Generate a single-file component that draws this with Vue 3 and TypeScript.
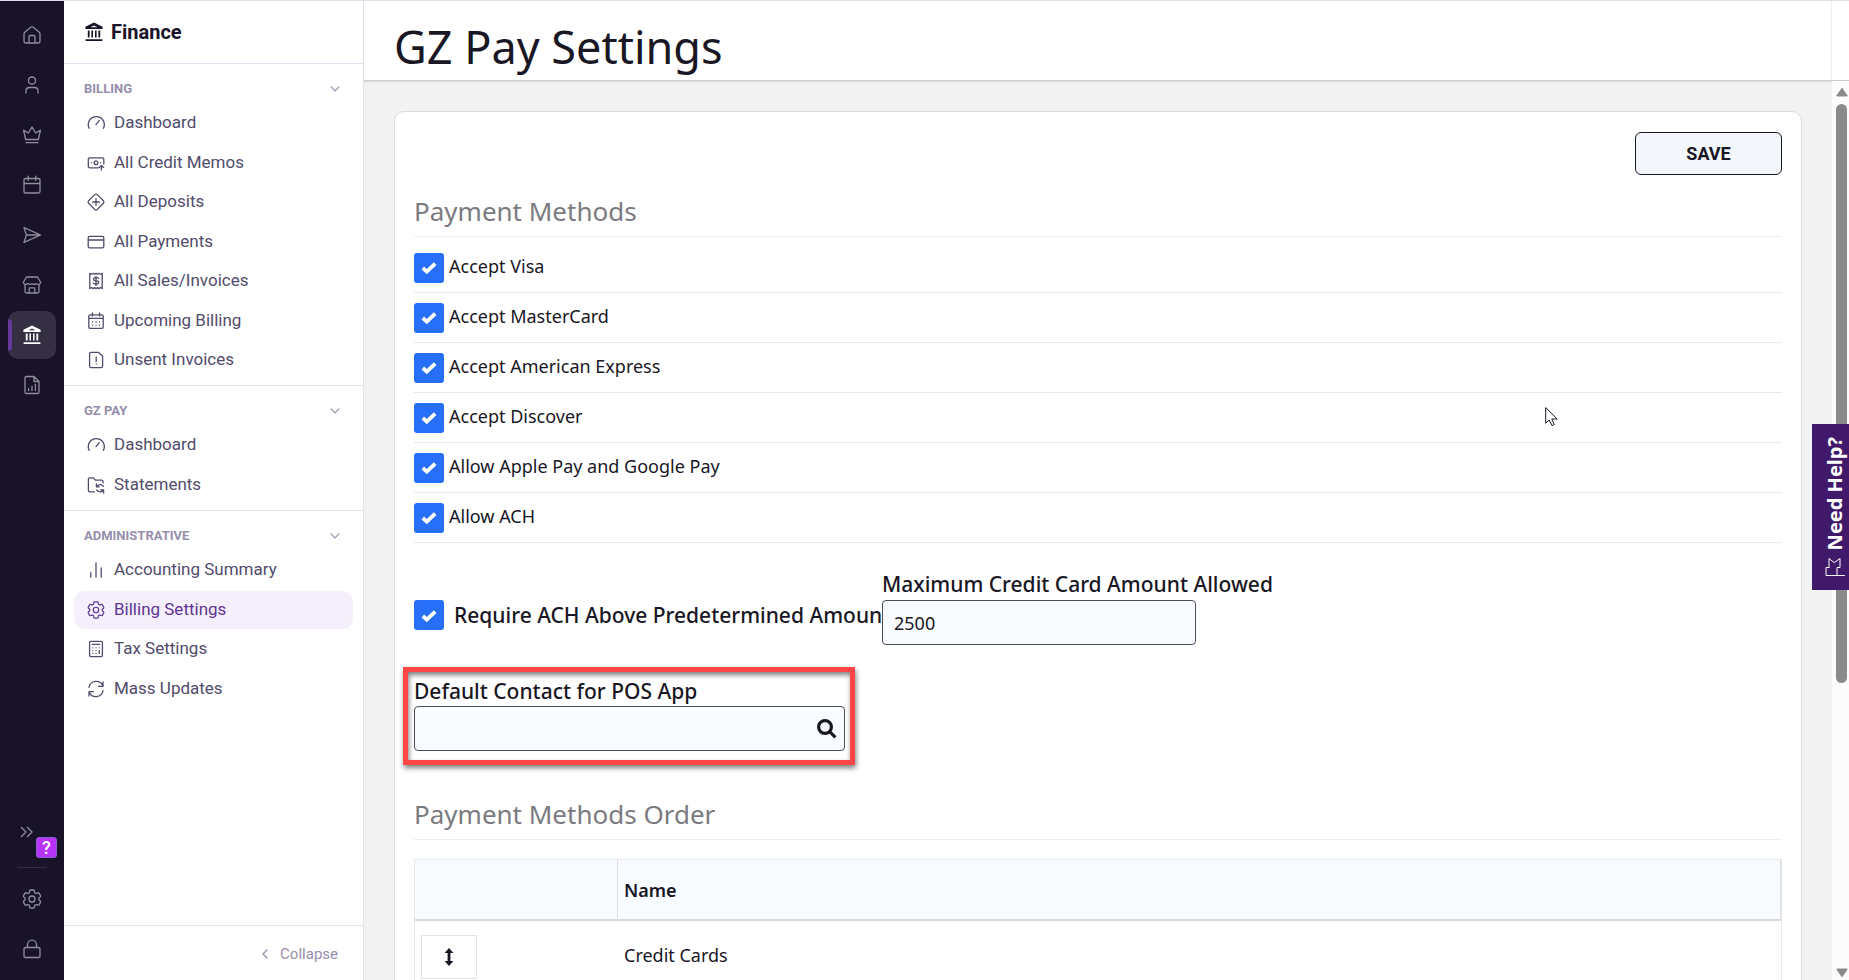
<script setup lang="ts">
import { ref } from 'vue'

interface NavItem {
  label: string
  icon: string
  active?: boolean
}
interface NavSection {
  title: string
  items: NavItem[]
}
interface RailItem {
  label: string
  icon: string
  active?: boolean
}

const gearPath =
  'M9.594 3.94c.09-.542.56-.94 1.11-.94h2.593c.55 0 1.02.398 1.11.94l.213 1.281c.063.374.313.686.645.87.074.04.147.083.22.127.325.196.72.257 1.075.124l1.217-.456a1.125 1.125 0 0 1 1.37.49l1.296 2.247a1.125 1.125 0 0 1-.26 1.431l-1.003.827c-.293.241-.438.613-.43.992a7.723 7.723 0 0 1 0 .255c-.008.378.137.75.43.991l1.004.827c.424.35.534.955.26 1.43l-1.298 2.247a1.125 1.125 0 0 1-1.369.491l-1.217-.456c-.355-.133-.75-.072-1.076.124a6.47 6.47 0 0 1-.22.128c-.331.183-.581.495-.644.869l-.213 1.281c-.09.543-.56.94-1.11.94h-2.594c-.55 0-1.019-.398-1.11-.94l-.213-1.281c-.062-.374-.312-.686-.644-.87a6.52 6.52 0 0 1-.22-.127c-.325-.196-.72-.257-1.076-.124l-1.217.456a1.125 1.125 0 0 1-1.369-.49l-1.297-2.247a1.125 1.125 0 0 1 .26-1.431l1.004-.827c.292-.24.437-.613.43-.991a6.932 6.932 0 0 1 0-.255c.007-.38-.138-.751-.43-.992l-1.004-.827a1.125 1.125 0 0 1-.26-1.43l1.297-2.247a1.125 1.125 0 0 1 1.37-.491l1.216.456c.356.133.751.072 1.076-.124.072-.044.146-.086.22-.128.332-.183.582-.495.644-.869l.214-1.28ZM15 12a3 3 0 1 1-6 0 3 3 0 0 1 6 0Z'

// Outline icons on a 20-unit grid
const icons: Record<string, string> = {
  home: 'M2 9 Q2 7.8 3 7 L8.8 2.3 Q10 1.4 11.2 2.3 L17 7 Q18 7.8 18 9 V16 Q18 18 16 18 H4 Q2 18 2 16 Z M7 18 V12 Q7 10.5 8.5 10.5 H11.5 Q13 10.5 13 12 V18',
  person: 'M10 2 a3.6 3.6 0 1 1 0 7.2 a3.6 3.6 0 1 1 0 -7.2 M4 18 V16 Q4 12.5 7.5 12.5 H12.5 Q16 12.5 16 16 V18',
  crown: 'M3.6 14.5 L1.6 5.2 L6.3 8 L10 2 L13.7 8 L18.4 5.2 L16.4 14.5 Z M4 17.6 H16',
  calendar: 'M3.5 3.5 H16.5 Q18 3.5 18 5 V16.5 Q18 18 16.5 18 H3.5 Q2 18 2 16.5 V5 Q2 3.5 3.5 3.5 Z M2 8.5 H18 M6.2 1.2 V5.4 M13.8 1.2 V5.4',
  send: 'M2 2.6 L18.6 10 L2 17.4 L4.4 10 Z M4.4 10 H18',
  store: 'M4.5 2 H15.5 L18.5 7 V8 Q18.3 9.4 16.2 9.4 Q14.8 9.4 14 8.6 Q12.8 9.4 12 9.4 Q10.8 9.4 10 8.6 Q9.2 9.4 8 9.4 Q7 9.4 6 8.6 Q5 9.4 3.8 9.4 Q1.7 9.4 1.5 8 V7 Z M3 9.6 V16.5 Q3 18 4.5 18 H15.5 Q17 18 17 16.5 V9.6 M7.2 18 V13.6 Q7.2 12.8 8 12.8 H12 Q12.8 12.8 12.8 13.6 V18',
  report: 'M4.5 1.5 H12 L17 6.5 V17 Q17 18.5 15.5 18.5 H4.5 Q3 18.5 3 17 V3 Q3 1.5 4.5 1.5 Z M12 1.5 V6.5 H17 M6.6 13.4 V15.4 M10 11.4 V15.4 M13.4 9.4 V15.4',
  lock: 'M3.5 8.5 H16.5 Q18 8.5 18 10 V17 Q18 18.5 16.5 18.5 H3.5 Q2 18.5 2 17 V10 Q2 8.5 3.5 8.5 Z M5.5 8.5 V5.6 A4.5 4.5 0 0 1 14.5 5.6 V8.5',
  gauge: 'M3.2 15.3 A8 8 0 1 1 17.4 15.3 M10 11.6 L13.2 7.6',
  memo: 'M12.5 14.8 H4 Q2.3 14.8 2.3 13.2 V6.4 Q2.3 4.8 4 4.8 H16.2 Q17.8 4.8 17.8 6.4 V11 M10 7.8 a1.9 1.9 0 1 1 0 3.8 a1.9 1.9 0 1 1 0 -3.8 M5.3 9.7 h.1 M14.6 9.7 h.1 M15.4 17 V12.6 M13.2 14.4 L15.4 12.4 L17.6 14.4',
  deposit: 'M8.7 2.6 Q10 1.6 11.3 2.6 L17.4 8.7 Q18.4 10 17.4 11.3 L11.3 17.4 Q10 18.4 8.7 17.4 L2.6 11.3 Q1.6 10 2.6 8.7 Z M10 6.6 V13.4 M6.6 10 H13.4',
  card: 'M3.6 4.4 H16.4 Q17.8 4.4 17.8 5.8 V14.4 Q17.8 15.8 16.4 15.8 H3.6 Q2.2 15.8 2.2 14.4 V5.8 Q2.2 4.4 3.6 4.4 Z M2.2 8 H17.8',
  receipt: 'M3.8 2.2 V17.4 L5.6 16.6 L7.2 17.6 L8.6 16.6 L10 17.6 L11.4 16.6 L12.8 17.6 L14.4 16.6 L16.2 17.4 V2.2 L14.4 3.2 L12.8 2.2 L11.4 3.2 L10 2.2 L8.6 3.2 L7.2 2.2 L5.6 3.2 Z M12.6 7.4 Q12 6.6 10.6 6.6 H9.6 Q7.6 6.6 7.6 8.2 Q7.6 9.8 9.6 9.8 H10.6 Q12.6 9.8 12.6 11.4 Q12.6 13 10.6 13 H9.4 Q8 13 7.4 12.2 M10 5.4 V14.4',
  schedule: 'M4 3.8 H16 Q17.2 3.8 17.2 5 V16 Q17.2 17.4 16 17.4 H4 Q2.8 17.4 2.8 16 V5 Q2.8 3.8 4 3.8 Z M2.8 7.4 H17.2 M6.4 1.8 V5 M13.6 1.8 V5 M6.6 11 h.1 M10 11 h.1 M13.4 11 h.1 M6.6 14.2 h.1 M10 14.2 h.1 M13.4 14.2 h.1',
  alert: 'M5 2.4 H12.6 L16.6 6 V16 Q16.6 17.6 15 17.6 H5 Q3.6 17.6 3.6 16 V4 Q3.6 2.4 5 2.4 Z M10.2 7 V11.4 M10.2 14 v.1',
  folder: 'M8.4 16.8 H3.8 Q2.4 16.8 2.4 15.4 V4.2 Q2.4 2.8 3.8 2.8 H7.4 L9.4 5.2 H15.6 Q17 5.2 17 6.6 V7.8 M17.6 11.4 Q14 7.8 10.6 11.6 M10.4 8.8 V11.8 H13.2 M10.8 15 Q14 18.8 17.4 15.2 M17.6 18 V15 H14.8',
  bars: 'M4.8 17 V12.6 M10 17 V2.8 M15.2 17 V8',
  calculator: 'M5 2.4 H15 Q16.4 2.4 16.4 3.8 V16.2 Q16.4 17.6 15 17.6 H5 Q3.6 17.6 3.6 16.2 V3.8 Q3.6 2.4 5 2.4 Z M6.4 5.4 H13.6 M6.8 8.8 h.1 M10 8.8 h.1 M13.2 8.8 h.1 M6.8 11.6 h.1 M10 11.6 h.1 M6.8 14.4 h.1 M10 14.4 h.1 M13.2 11.6 V14.4',
  refresh: 'M3 8.4 A7.2 7.2 0 0 1 16.8 7 M17 3 V7.4 H12.6 M17 11.6 A7.2 7.2 0 0 1 3.2 13 M3 17 V12.6 H7.4',
}

const rail: RailItem[] = [
  { label: 'Home', icon: 'home' },
  { label: 'Contacts', icon: 'person' },
  { label: 'Memberships', icon: 'crown' },
  { label: 'Events', icon: 'calendar' },
  { label: 'Communication', icon: 'send' },
  { label: 'Store', icon: 'store' },
  { label: 'Finance', icon: 'bank', active: true },
  { label: 'Reports', icon: 'report' },
]

const sections: NavSection[] = [
  {
    title: 'BILLING',
    items: [
      { label: 'Dashboard', icon: 'gauge' },
      { label: 'All Credit Memos', icon: 'memo' },
      { label: 'All Deposits', icon: 'deposit' },
      { label: 'All Payments', icon: 'card' },
      { label: 'All Sales/Invoices', icon: 'receipt' },
      { label: 'Upcoming Billing', icon: 'schedule' },
      { label: 'Unsent Invoices', icon: 'alert' },
    ],
  },
  {
    title: 'GZ PAY',
    items: [
      { label: 'Dashboard', icon: 'gauge' },
      { label: 'Statements', icon: 'folder' },
    ],
  },
  {
    title: 'ADMINISTRATIVE',
    items: [
      { label: 'Accounting Summary', icon: 'bars' },
      { label: 'Billing Settings', icon: 'gear', active: true },
      { label: 'Tax Settings', icon: 'calculator' },
      { label: 'Mass Updates', icon: 'refresh' },
    ],
  },
]

const methods = ref([
  { label: 'Accept Visa', on: true },
  { label: 'Accept MasterCard', on: true },
  { label: 'Accept American Express', on: true },
  { label: 'Accept Discover', on: true },
  { label: 'Allow Apple Pay and Google Pay', on: true },
  { label: 'Allow ACH', on: true },
])
const requireAch = ref(true)
const maxAmount = ref('2500')
const contact = ref('')
</script>

<template>
  <div class="app">
    <nav class="rail" aria-label="Modules">
      <a
        v-for="item in rail"
        :key="item.label"
        href="#"
        class="rail-item"
        :class="{ active: item.active }"
        :aria-label="item.label"
      >
        <svg v-if="item.icon === 'bank'" class="icon" viewBox="0 0 20 20">
          <path class="solid" d="M10 .6 18.6 4.8V7H1.4V4.8Z M3.8 8.6h1.8v7H3.8Z M7.4 8.6h1.6v7H7.4Z M11 8.6h1.6v7H11Z M14.4 8.6h1.8v7h-1.8Z M1.6 17.2h16.8v1.9H1.6Z" />
          <path class="cut" d="M6.4 5.2 10 3.4 13.6 5.2Z" />
        </svg>
        <svg v-else class="icon" viewBox="0 0 20 20"><path :d="icons[item.icon]" /></svg>
      </a>
      <div class="rail-foot">
        <button class="expand" type="button" aria-label="Expand menu">
          <svg viewBox="0 0 14 12"><path d="M1.5 1.5 6 6 1.5 10.5M7.5 1.5 12 6 7.5 10.5" /></svg>
          <span class="badge">?</span>
        </button>
        <div class="rail-line"></div>
        <a href="#" class="rail-item" aria-label="Settings">
          <svg class="icon gear" viewBox="2 2 20 20"><path :d="gearPath" /></svg>
        </a>
        <a href="#" class="rail-item" aria-label="Lock">
          <svg class="icon" viewBox="0 0 20 20"><path :d="icons.lock" /></svg>
        </a>
      </div>
    </nav>

    <aside class="side">
      <header class="side-head">
        <svg class="bank" viewBox="0 0 20 20">
          <path class="solid" d="M10 .6 18.6 4.8V7H1.4V4.8Z M3.8 8.6h1.8v7H3.8Z M7.4 8.6h1.6v7H7.4Z M11 8.6h1.6v7H11Z M14.4 8.6h1.8v7h-1.8Z M1.6 17.2h16.8v1.9H1.6Z" />
          <path class="cut" d="M6.4 5.2 10 3.4 13.6 5.2Z" />
        </svg>
        <span>Finance</span>
      </header>
      <section v-for="section in sections" :key="section.title" class="group">
        <button class="group-head" type="button" aria-expanded="true">
          <span>{{ section.title }}</span>
          <svg viewBox="0 0 10 6"><path d="M1 .8 5 4.8 9 .8" /></svg>
        </button>
        <ul>
          <li v-for="item in section.items" :key="item.label">
            <a href="#" class="nav-item" :class="{ active: item.active }">
              <svg v-if="item.icon === 'gear'" class="icon" viewBox="1 1 22 22"><path :d="gearPath" /></svg>
              <svg v-else class="icon" viewBox="0 0 20 20"><path :d="icons[item.icon]" /></svg>
              <span>{{ item.label }}</span>
            </a>
          </li>
        </ul>
      </section>
      <button class="collapse" type="button">
        <svg viewBox="0 0 6 10"><path d="M5 1 1 5 5 9" /></svg>
        <span>Collapse</span>
      </button>
    </aside>

    <div class="page">
      <header class="page-head"><h1>GZ Pay Settings</h1></header>
      <div class="body">
        <main class="content">
          <form class="card" @submit.prevent>
            <div class="actions"><button class="save" type="submit">SAVE</button></div>
            <h2>Payment Methods</h2>
            <ul class="methods">
              <li v-for="(method, i) in methods" :key="method.label">
                <input :id="`method-${i}`" v-model="method.on" type="checkbox" />
                <label :for="`method-${i}`">{{ method.label }}</label>
              </li>
            </ul>

            <div class="limits">
              <div class="require">
                <input id="require-ach" v-model="requireAch" type="checkbox" />
                <label for="require-ach">Require ACH Above Predetermined Amount</label>
              </div>
              <div class="amount">
                <label for="max-amount">Maximum Credit Card Amount Allowed</label>
                <input id="max-amount" v-model="maxAmount" class="field" type="text" />
              </div>
            </div>

            <div class="contact">
              <label for="contact">Default Contact for POS App</label>
              <div class="lookup field">
                <input id="contact" v-model="contact" type="text" />
                <button type="button" aria-label="Search contacts">
                  <svg viewBox="0 0 20 20"><circle cx="8" cy="8" r="6.4" /><path d="M12.6 12.6 18.4 18.4" /></svg>
                </button>
              </div>
            </div>

            <h2>Payment Methods Order</h2>
            <table>
              <thead>
                <tr>
                  <th class="handle" scope="col"></th>
                  <th scope="col">Name</th>
                </tr>
              </thead>
              <tbody>
                <tr>
                  <td>
                    <button class="move" type="button" aria-label="Reorder">
                      <svg viewBox="0 0 10 18"><path d="M5 0 9.4 5H6.4V13H9.4L5 18 .6 13H3.6V5H.6Z" /></svg>
                    </button>
                  </td>
                  <td class="name">Credit Cards</td>
                </tr>
              </tbody>
            </table>
          </form>
        </main>
        <div class="scrollbar" aria-hidden="true">
          <svg viewBox="0 0 12 10"><path d="M6 .6 11.4 8.2Q11.8 9.6 10.6 9.6H1.4Q.2 9.6 .6 8.2Z" /></svg>
          <div class="track"><div class="thumb"></div></div>
          <svg viewBox="0 0 12 10"><path d="M6 9.4 .6 1.8Q.2 .4 1.4 .4H10.6Q11.8 .4 11.4 1.8Z" /></svg>
        </div>
      </div>
    </div>

    <button class="help" type="button">
      <span>Need Help?</span>
      <svg viewBox="0 0 20 20"><path d="M4 10.5V1.5L9.2 5.6 15 1.5V10.5H12V18.5M4 10.5H1V18.5H19.5" /></svg>
    </button>
    <svg class="cursor" viewBox="0 0 13 20" aria-hidden="true">
      <path d="M.7 1V16.2L4.2 13 7 18.6 9.2 17.6 6.8 12H11.8Z" />
    </svg>
  </div>
</template>

<style>
body {
  margin: 0;
  overflow: hidden;
}
</style>

<style scoped>
* {
  box-sizing: border-box;
}
.app {
  display: flex;
  position: relative;
  height: 100vh;
  border-top: 1px solid #e3deec;
  background: #fff;
  color: #191724;
  font-family: 'Noto Sans', 'Open Sans', sans-serif;
}
button {
  padding: 0;
  border: 0;
  background: none;
  font: inherit;
  color: inherit;
  cursor: pointer;
}
a {
  color: inherit;
  text-decoration: none;
}
ul {
  margin: 0;
  padding: 0;
  list-style: none;
}
svg {
  display: block;
  flex: none;
  fill: none;
  stroke: currentColor;
  stroke-linecap: round;
  stroke-linejoin: round;
}
.icon {
  width: 20px;
  height: 20px;
  stroke-width: 1.3;
}
.solid {
  fill: currentColor;
  stroke: none;
}

/* icon rail */
.rail {
  display: flex;
  flex: none;
  flex-direction: column;
  align-items: center;
  gap: 2px;
  width: 64px;
  padding: 10px 0 7px;
  background: #19132a;
  color: #918d9d;
}
.rail-item {
  display: flex;
  align-items: center;
  justify-content: center;
  width: 48px;
  height: 48px;
  border-radius: 10px;
}
.rail-item.active {
  position: relative;
  overflow: hidden;
  background: #352f44;
  color: #fff;
}
.rail-item.active::before {
  content: '';
  position: absolute;
  top: 8px;
  left: 0;
  width: 4px;
  height: 32px;
  border-radius: 0 4px 4px 0;
  background: #653a9b;
}
.rail .cut {
  fill: #352f44;
  stroke: none;
}
.rail-foot {
  display: flex;
  flex-direction: column;
  align-items: center;
  gap: 2px;
  margin-top: auto;
}
.expand {
  position: relative;
  width: 48px;
  height: 36px;
}
.expand svg {
  width: 14px;
  height: 12px;
  margin-left: 12px;
  stroke-width: 1.3;
}
.badge {
  position: absolute;
  top: 23px;
  left: 28px;
  width: 21px;
  height: 21px;
  border: 1px solid #8a5fd0;
  border-radius: 3px;
  background: #b833f8;
  color: #fff;
  font: 500 18px/19px Roboto, sans-serif;
  text-align: center;
}
.rail-line {
  width: 30px;
  height: 1px;
  margin: 15px 0 5px;
  background: #352f44;
}

/* sidebar */
.side {
  display: flex;
  flex: none;
  flex-direction: column;
  width: 300px;
  border-right: 1px solid #e3e0ec;
  font-family: Roboto, sans-serif;
}
.side-head {
  display: flex;
  align-items: center;
  gap: 7px;
  height: 63px;
  padding-left: 20px;
  border-bottom: 1px solid #e0dcec;
  color: #19132a;
  font-size: 20px;
  font-weight: 700;
}
.bank {
  width: 20px;
  height: 20px;
}
.side .cut {
  fill: #fff;
  stroke: none;
}
.group {
  padding: 16px 10px 6px;
  border-bottom: 1px solid #e3e0ec;
}
.group:nth-last-child(2) {
  border-bottom: 0;
}
.group-head {
  display: flex;
  align-items: center;
  justify-content: space-between;
  width: 100%;
  padding: 0 13px 6px 10px;
  color: #958eab;
  font-size: 13px;
  font-weight: 700;
  line-height: 18px;
}
.group-head svg {
  width: 10px;
  height: 6px;
  stroke-width: 1.2;
}
.group li {
  margin-bottom: 2px;
}
.group li:nth-child(even) {
  margin-bottom: 1px;
}
.group li:last-child {
  margin-bottom: 0;
}
.nav-item {
  display: flex;
  align-items: center;
  gap: 8px;
  height: 38px;
  padding-left: 12px;
  border-radius: 10px;
  color: #524b6b;
  font-size: 17px;
}
.nav-item span {
  padding-bottom: 2px;
}
.nav-item.active {
  background: #f4effa;
  color: #5f3494;
}
.collapse {
  display: flex;
  align-items: center;
  justify-content: flex-end;
  gap: 12px;
  height: 55px;
  margin-top: auto;
  padding: 2px 25px 0 0;
  border-top: 1px solid #e3e0ec;
  color: #958eab;
  font-size: 15px;
}
.collapse svg {
  width: 6px;
  height: 10px;
  stroke-width: 1.3;
}

/* page */
.page {
  display: flex;
  flex: 1;
  flex-direction: column;
  min-width: 0;
}
.page-head {
  flex: none;
  height: 80px;
  padding-right: 17px;
  border-bottom: 1px solid #ccc;
}
h1 {
  margin: 0;
  padding: 13px 0 0 30px;
  border-right: 1px solid #ededed;
  font-size: 45px;
  font-weight: 400;
  line-height: 66px;
}
.body {
  display: flex;
  flex: 1;
  min-height: 0;
}
.content {
  flex: 1;
  min-width: 0;
  overflow: hidden;
  padding: 30px;
  background: #f2f2f2;
  box-shadow: inset 0 2px 2px -1px rgba(0, 0, 0, 0.1);
}
.card {
  padding: 20px 19px;
  border: 1px solid #ddd;
  border-radius: 10px;
  background: #fff;
}
.actions {
  display: flex;
  justify-content: flex-end;
  margin-bottom: 18px;
}
.save {
  width: 147px;
  height: 43px;
  border: 1px solid #191724;
  border-radius: 6px;
  background: #f3f7fb;
  font-family: Roboto, sans-serif;
  font-size: 18px;
  font-weight: 700;
}
h2 {
  margin: 0;
  padding-bottom: 7px;
  border-bottom: 1px solid #eee;
  color: #7b7b7f;
  font-size: 26px;
  font-weight: 400;
  line-height: 36px;
}
.methods {
  padding-top: 6px;
}
.methods li {
  display: flex;
  align-items: center;
  gap: 5px;
  height: 50px;
  border-bottom: 1px solid #e8e8e8;
  font-size: 18px;
}
.methods label {
  padding-bottom: 4px;
}
input[type='checkbox'] {
  flex: none;
  appearance: none;
  width: 30px;
  height: 30px;
  margin: 0;
  border-radius: 3px;
  background: #fff;
}
input[type='checkbox']:checked {
  background: #276ef8
    url("data:image/svg+xml,%3Csvg xmlns='http://www.w3.org/2000/svg' viewBox='0 0 16 13'%3E%3Cpath d='M1.8 7 5.8 10.6 14.2 2.6' fill='none' stroke='%23fff' stroke-width='3.8'/%3E%3C/svg%3E")
    center / 16px 13px no-repeat;
}
.limits {
  display: flex;
  align-items: flex-end;
  padding-top: 28px;
}
.require {
  display: flex;
  flex: none;
  align-items: center;
  gap: 10px;
  width: 468px;
  height: 60px;
  overflow: hidden;
  white-space: nowrap;
}
.limits label,
.contact label {
  font-size: 21px;
  font-weight: 500;
  line-height: 26px;
}
.amount {
  display: flex;
  flex-direction: column;
  align-items: flex-start;
  gap: 3px;
}
.field {
  width: 314px;
  height: 45px;
  border: 1px solid #4a4d5c;
  border-radius: 4px;
  background: #f8fbff;
}
input.field {
  padding: 0 11px;
  color: inherit;
  font: inherit;
  font-size: 18px;
}
.contact {
  display: flex;
  flex-direction: column;
  gap: 2px;
  width: 452px;
  margin: 22px 0 31px -11px;
  padding: 6px 5px 9px 6px;
  border: 5px solid #ff4545;
  box-shadow: 1px 3px 5px rgba(0, 0, 0, 0.5), inset 1px 3px 5px rgba(0, 0, 0, 0.5);
}
.lookup {
  display: flex;
  align-items: center;
  width: 100%;
  padding-right: 7px;
}
.lookup input {
  flex: 1;
  min-width: 0;
  padding: 0 11px;
  border: 0;
  outline: 0;
  background: none;
  font: inherit;
  font-size: 18px;
}
.lookup svg {
  width: 20px;
  height: 20px;
  stroke-width: 3.2;
  stroke-linecap: butt;
}
table {
  width: 100%;
  margin-top: 19px;
  border: 1px solid #e8e8e8;
  border-spacing: 0;
  font-size: 18px;
  text-align: left;
}
th {
  height: 61px;
  padding: 0 6px;
  border-right: 1px solid #ddd;
  border-bottom: 2px solid #d8d8d8;
  background: #f8fbff;
  font-weight: 600;
}
.handle {
  width: 203px;
}
td {
  padding: 14px 6px;
}
.name {
  padding-bottom: 18px;
}
.move {
  display: flex;
  align-items: center;
  justify-content: center;
  width: 56px;
  height: 44px;
  border: 1px solid #e4e4e4;
}
.move svg {
  width: 10px;
  height: 18px;
  fill: currentColor;
  stroke: none;
}

/* scrollbar, help tab and pointer */
.scrollbar {
  display: flex;
  flex: none;
  flex-direction: column;
  align-items: center;
  width: 17px;
  padding: 6px 0 2px 2px;
  background: #fcfcfc;
  color: #8b8b8b;
}
.scrollbar svg {
  width: 12px;
  height: 10px;
  fill: currentColor;
  stroke: none;
}
.track {
  flex: 1;
  width: 11px;
  padding: 7px 0;
}
.thumb {
  height: 67.6%;
  border-radius: 6px;
  background: #8b8b8b;
}
.help {
  display: flex;
  position: absolute;
  top: 423px;
  right: 0;
  flex-direction: column;
  align-items: center;
  justify-content: center;
  gap: 6px;
  width: 37px;
  height: 166px;
  padding-left: 8px;
  background: #41196b;
  color: #fff;
  font-size: 20px;
  font-weight: 700;
}
.help span {
  writing-mode: vertical-rl;
  transform: rotate(180deg);
}
.help svg {
  width: 20px;
  height: 20px;
  stroke-width: 1;
}
.cursor {
  position: absolute;
  top: 406px;
  left: 1545px;
  width: 13px;
  height: 20px;
  fill: #fff;
  stroke: #191724;
}
</style>
